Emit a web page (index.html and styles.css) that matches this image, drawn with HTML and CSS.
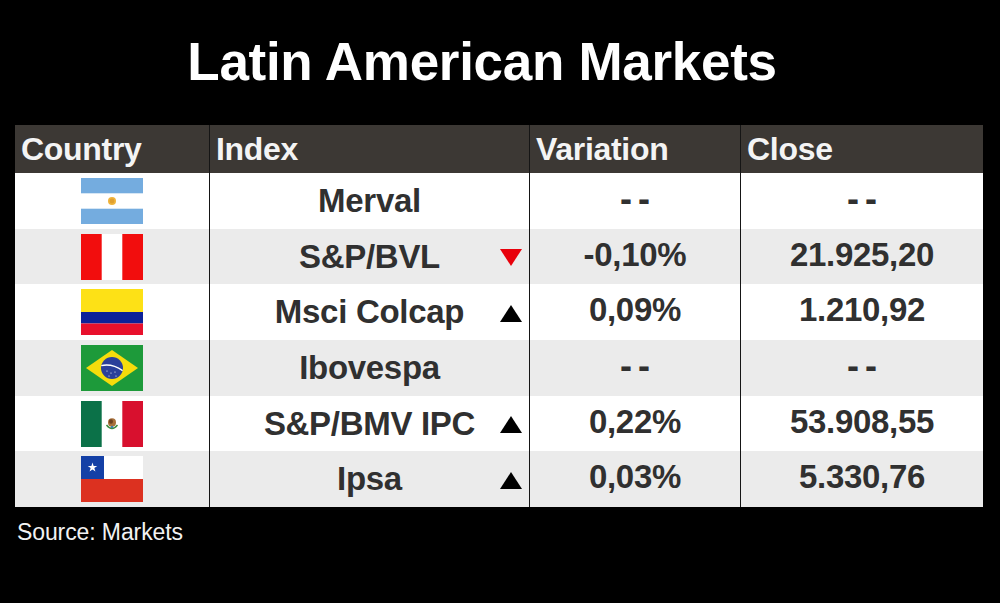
FILE: index.html
```html
<!DOCTYPE html>
<html lang="en">
<head>
<meta charset="utf-8">
<title>Latin American Markets</title>
<link rel="stylesheet" href="styles.css">
</head>
<body>
<h1 class="title">Latin American Markets</h1>
<div class="table">
  <div class="row head">
    <div class="cell">Country</div>
    <div class="cell">Index</div>
    <div class="cell">Variation</div>
    <div class="cell">Close</div>
  </div>
  <div class="body">
    <div class="row">
      <div class="cell flag-cell">
        <svg class="flag" viewBox="0 0 62 46"><rect width="62" height="46" fill="#fff"/><rect width="62" height="15.3" fill="#74acdf"/><rect y="30.7" width="62" height="15.3" fill="#74acdf"/><circle cx="31" cy="23" r="4" fill="#f0b43c"/><circle cx="31" cy="23" r="2.4" fill="#e0a030"/></svg>
      </div>
      <div class="cell idx"><span></span><span class="name">Merval</span><span></span></div>
      <div class="cell num"><span class="dash">--</span></div>
      <div class="cell num"><span class="dash">--</span></div>
    </div>
    <div class="row alt">
      <div class="cell flag-cell">
        <svg class="flag" viewBox="0 0 62 46"><rect width="62" height="46" fill="#fff"/><rect width="20.7" height="46" fill="#f20d0d"/><rect x="41.3" width="20.7" height="46" fill="#f20d0d"/></svg>
      </div>
      <div class="cell idx"><span></span><span class="name">S&amp;P/BVL</span><svg class="tri" viewBox="0 0 22 17"><polygon points="0,0 22,0 11,17" fill="#e8000b"/></svg></div>
      <div class="cell num">-0,10%</div>
      <div class="cell num">21.925,20</div>
    </div>
    <div class="row">
      <div class="cell flag-cell">
        <svg class="flag" viewBox="0 0 62 46"><rect width="62" height="23" fill="#fde116"/><rect y="23" width="62" height="11.5" fill="#0c2199"/><rect y="34.5" width="62" height="11.5" fill="#e8102c"/></svg>
      </div>
      <div class="cell idx"><span></span><span class="name">Msci Colcap</span><svg class="tri" viewBox="0 0 22 17"><polygon points="11,0 22,17 0,17" fill="#000"/></svg></div>
      <div class="cell num">0,09%</div>
      <div class="cell num">1.210,92</div>
    </div>
    <div class="row alt">
      <div class="cell flag-cell">
        <svg class="flag" viewBox="0 0 62 46"><rect width="62" height="46" fill="#1d9a3a"/><polygon points="5,23 31,5 57,23 31,41" fill="#f5dc0c"/><circle cx="31" cy="23" r="11" fill="#2a3f9a"/><path d="M20.3 20.6 Q31 18.2 41.6 25.6" stroke="#fff" stroke-width="1.3" fill="none"/><circle cx="26" cy="26" r="0.6" fill="#fff"/><circle cx="30" cy="28" r="0.6" fill="#fff"/><circle cx="34" cy="27" r="0.6" fill="#fff"/><circle cx="28" cy="31" r="0.6" fill="#fff"/><circle cx="35" cy="31" r="0.6" fill="#fff"/></svg>
      </div>
      <div class="cell idx"><span></span><span class="name">Ibovespa</span><span></span></div>
      <div class="cell num"><span class="dash">--</span></div>
      <div class="cell num"><span class="dash">--</span></div>
    </div>
    <div class="row">
      <div class="cell flag-cell">
        <svg class="flag" viewBox="0 0 62 46"><rect width="62" height="46" fill="#fff"/><rect width="20.7" height="46" fill="#0b7148"/><rect x="41.3" width="20.7" height="46" fill="#d8102e"/><ellipse cx="31" cy="21.5" rx="4" ry="4.2" fill="#a8703a"/><ellipse cx="30" cy="20.5" rx="2" ry="2.2" fill="#6b4020"/><path d="M25.5 24 Q31 31 36.5 24" stroke="#3d8a3f" stroke-width="1.4" fill="none"/><circle cx="31" cy="26" r="1.2" fill="#3a7fb0"/></svg>
      </div>
      <div class="cell idx"><span></span><span class="name">S&amp;P/BMV IPC</span><svg class="tri" viewBox="0 0 22 17"><polygon points="11,0 22,17 0,17" fill="#000"/></svg></div>
      <div class="cell num">0,22%</div>
      <div class="cell num">53.908,55</div>
    </div>
    <div class="row alt">
      <div class="cell flag-cell">
        <svg class="flag" viewBox="0 0 62 46"><rect width="62" height="23" fill="#fff"/><rect y="23" width="62" height="23" fill="#dc3120"/><rect width="23" height="23" fill="#1440a6"/><polygon points="11.5,6.5 12.62,9.95 16.26,9.95 13.32,12.09 14.44,15.55 11.5,13.41 8.56,15.55 9.68,12.09 6.74,9.95 10.38,9.95" fill="#fff"/></svg>
      </div>
      <div class="cell idx"><span></span><span class="name">Ipsa</span><svg class="tri" viewBox="0 0 22 17"><polygon points="11,0 22,17 0,17" fill="#000"/></svg></div>
      <div class="cell num">0,03%</div>
      <div class="cell num">5.330,76</div>
    </div>
  </div>
</div>
<p class="source">Source: Markets</p>
</body>
</html>
```

FILE: styles.css
```css
html, body {
  margin: 0;
  padding: 0;
  background: #000;
}
body {
  width: 1000px;
  height: 603px;
  overflow: hidden;
  font-family: "Liberation Sans", Arial, sans-serif;
}
.title {
  margin: 0;
  padding: 32px 36px 0 0;
  height: 60px;
  line-height: 60px;
  font-size: 53px;
  font-weight: 700;
  letter-spacing: -0.3px;
  color: #fff;
  text-align: center;
}
.table {
  margin: 33px 0 0 15px;
  width: 968px;
}
.row {
  display: grid;
  grid-template-columns: 194px 320px 211px 243px;
  background: #fff;
}
.row.alt {
  background: #ebebeb;
}
.cell {
  border-left: 1px solid #151515;
  display: flex;
  align-items: center;
}
.cell:first-child {
  border-left: none;
}
.head {
  height: 48px;
  background: #3c3834;
}
.head .cell {
  padding-left: 6px;
  font-size: 32px;
  font-weight: 700;
  color: #f4f4f4;
  letter-spacing: -0.3px;
}
.body {
  display: flex;
  flex-direction: column;
  height: 334px;
}
.body .row {
  flex: 1;
}
.body .cell {
  font-size: 33px;
  font-weight: 700;
  color: #303030;
  letter-spacing: -0.3px;
}
.flag-cell {
  justify-content: center;
}
.flag {
  width: 62px;
  height: 46px;
  display: block;
}
.idx {
  display: grid;
  grid-template-columns: 1fr auto 1fr;
  align-items: center;
}
.idx .name {
  text-align: center;
}
.tri {
  justify-self: end;
  width: 22px;
  height: 17px;
  margin-right: 7px;
  margin-top: 2px;
}
.num {
  justify-content: center;
  padding-bottom: 4px;
}
.dash {
  font-size: 36px;
  letter-spacing: 6px;
  margin-left: 6px;
}
.source {
  margin: 11px 0 0 17px;
  font-size: 23px;
  line-height: 28px;
  color: #f2f2f2;
  letter-spacing: -0.1px;
}
```
